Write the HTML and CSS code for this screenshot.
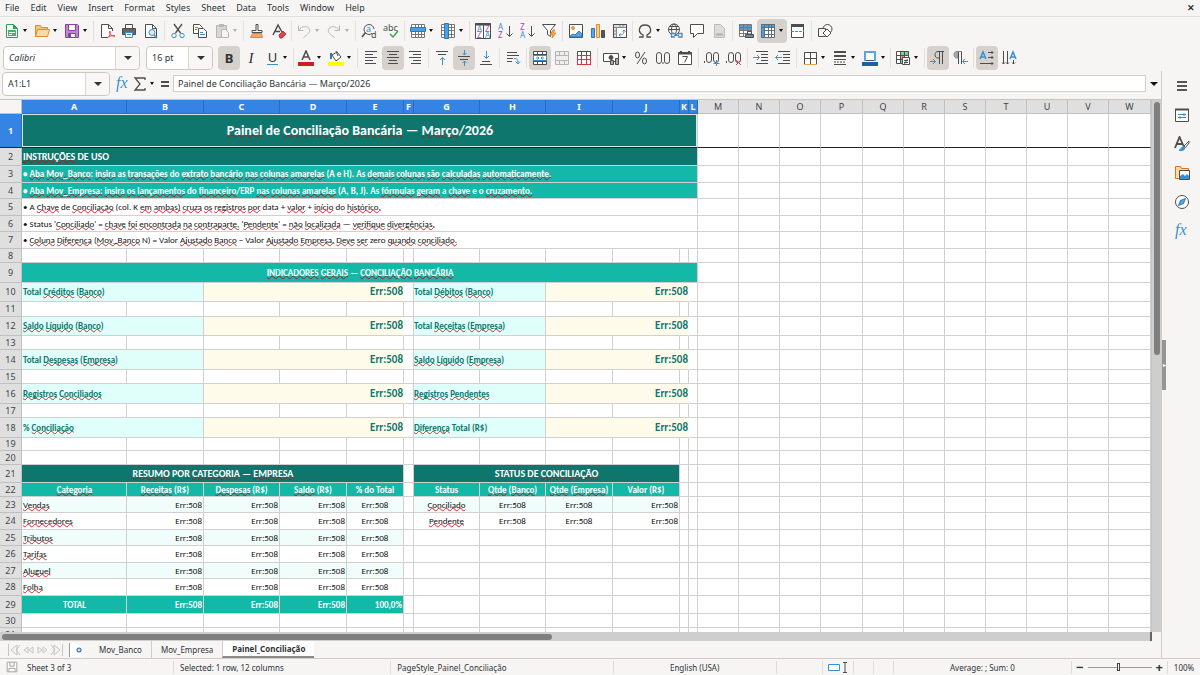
FILE: index.html
```html
<!DOCTYPE html>
<html lang="en">
<head>
    <meta charset="UTF-8">
    <meta name="viewport" content="width=device-width, initial-scale=1.0">
    <title>Painel de Conciliação Bancária</title>
    <link rel="stylesheet" href="styles.css">
</head>
<body>
    <!-- Icon sprite -->
    <svg class="sprite" aria-hidden="true">
        <symbol id="i-new" viewBox="0 0 16 16"><path stroke="#2e9e4f" fill="#fff" d="M2.500 1.500h7l4 4v9h-11z"/><path fill="#2e9e4f" stroke="none" d="M9 1v5h5z"/><path fill="#45b565" stroke="none" d="M4 7h8v6H4z"/><path stroke="#fff" d="M5 9.500h6M5 11.500h3"/></symbol>
        <symbol id="i-open" viewBox="0 0 16 16"><path fill="#f6c37a" stroke="#e08c2b" d="M1.500 13.500v-11h5l1 2h6v2"/><path fill="#fbd9a4" stroke="#e08c2b" d="M1.500 13.500l2-7h12l-2 7z"/></symbol>
        <symbol id="i-save" viewBox="0 0 16 16"><path fill="#c783d4" stroke="#8d3fa0" d="M1.500 1.500h12l1 1v12h-13z"/><path fill="#fff" stroke="#8d3fa0" d="M4.500 1.500h7v6h-7zM4.500 10.500h7v4h-7z"/><path fill="#8d3fa0" stroke="none" d="M5 11h2v3H5z"/></symbol>
        <symbol id="i-pdf" viewBox="0 0 16 16"><path fill="#fff" d="M13.500 8V5.500l-4-4h-7v13H8"/><path d="M9.500 1.500v4h4"/><path stroke="#e0434c" d="M8 15c3-2 4-5 3-7-2 1 1 6 5 5-3-1-6 0-8 2z"/></symbol>
        <symbol id="i-print" viewBox="0 0 16 16"><path fill="#fff" d="M4.500 5V1.500h7V5"/><path fill="#666" d="M1.500 5.500h13v6h-13z"/><path fill="#fff" stroke="#3a8fd0" d="M4.500 9.500h7v5h-7z"/><path stroke="#3a8fd0" d="M6 11.500h4"/></symbol>
        <symbol id="i-preview" viewBox="0 0 16 16"><path fill="#fff" d="M13.500 14.500h-11v-13h7l4 4z"/><path d="M9.500 1.500v4h4"/><circle cx="9" cy="9.500" r="3" fill="#d8ecfa" stroke="#3a8fd0"/><path stroke="#3a8fd0" stroke-width="1.500" d="M11 12l3 3"/></symbol>
        <symbol id="i-cut" viewBox="0 0 16 16"><path stroke-width="1.300" d="M4 1l6.500 9M12 1L5.500 10"/><circle cx="4" cy="12.500" r="2.200" stroke="#3a8fd0"/><circle cx="12" cy="12.500" r="2.200" stroke="#3a8fd0"/></symbol>
        <symbol id="i-copy" viewBox="0 0 16 16"><path fill="#fff" d="M1.500 1.500h6l3 3v6h-9z"/><path fill="#fff" d="M6.500 5.500h5l3 3v6h-8z"/><path stroke="#3a8fd0" d="M8 9.500h3M8 11.500h5M3 4.500h3M3 6.500h2"/></symbol>
        <symbol id="i-paste" viewBox="0 0 16 16"><g stroke="#b5b5b5"><path fill="#d6d6d6" d="M2.500 2.500h10v12h-10z"/><path fill="#bbb" d="M5.500 1.500h4v2h-4z"/><path fill="#f6f5f4" d="M7.500 6.500h4l3 3v5h-7z"/></g></symbol>
        <symbol id="i-brush" viewBox="0 0 16 16"><path d="M7 1.500h2v6h4v2H3v-2h4z"/><path fill="#f3a95a" stroke="#e08c2b" d="M3.500 10.500h9l1 4h-12z"/></symbol>
        <symbol id="i-clear" viewBox="0 0 16 16"><path stroke-width="1.500" d="M2 12L7 2l4 7M4 8.500h5"/><path fill="#e0434c" stroke="#c9303a" d="M8 12l4-4 3 3-4 4H9z"/></symbol>
        <symbol id="i-undo" viewBox="0 0 16 16"><path stroke="#b8b8b8" d="M2.500 2.500v5h5M2.500 7.500c3-5 10-5 11-1 1 3-2 5-6 8"/></symbol>
        <symbol id="i-redo" viewBox="0 0 16 16"><path stroke="#b8b8b8" d="M13.500 2.500v5h-5M13.500 7.500c-3-5-10-5-11-1-1 3 2 5 6 8"/></symbol>
        <symbol id="i-find" viewBox="0 0 16 16"><path d="M11 10.500A5 5 0 1 1 13 6"/><path stroke-width="1.500" d="M4.500 9.500L1 14"/><text x="5" y="9" class="g blue">a</text><text x="10" y="15" class="g">d</text></symbol>
        <symbol id="i-spell" viewBox="0 0 16 16"><text x="0" y="8" class="g">abc</text><path stroke="#35a853" stroke-width="1.500" d="M7 11l3 3 5-6"/></symbol>
        <symbol id="i-rows" viewBox="0 0 16 16"><path fill="#fff" stroke="none" d="M1 1h14v14H1z"/><path stroke="#777" d="M1.500 1.500h13v13h-13zM1 8.500h14M1 11.500h14M5.500 1v14M8.500 1v14M11.500 1v14"/><path fill="#4aa0e0" stroke="#2a78b5" d="M.5 4.500h15v4H.5z"/></symbol>
        <symbol id="i-cols" viewBox="0 0 16 16"><path fill="#fff" stroke="none" d="M1 1h14v14H1z"/><path stroke="#777" d="M1.500 1.500h13v13h-13zM1 4.500h14M1 7.500h14M1 11.500h14M11.500 1v14"/><path fill="#4aa0e0" stroke="#2a78b5" d="M4.500.5h4v15h-4z"/></symbol>
        <symbol id="i-sort" viewBox="0 0 16 16"><path fill="#fff" d="M.5.500h15v15H.5zM8.500 1v14"/><path stroke-width="2" d="M0 1.500h16"/><text x="2" y="9" class="s blue">A</text><text x="2" y="15" class="s purple">Z</text><text x="10" y="9" class="s purple">Z</text><text x="10" y="15" class="s blue">A</text></symbol>
        <symbol id="i-az" viewBox="0 0 16 16"><text x="1" y="7" class="s blue">A</text><text x="1" y="15" class="s purple">Z</text><path d="M12.500 3v10M9.500 10.500l3 3 3-3"/></symbol>
        <symbol id="i-za" viewBox="0 0 16 16"><text x="1" y="7" class="s purple">Z</text><text x="1" y="15" class="s blue">A</text><path d="M12.500 3v10M9.500 10.500l3 3 3-3"/></symbol>
        <symbol id="i-filter" viewBox="0 0 16 16"><path fill="#fff" d="M1.500 1.500h13l-5 6v6l-3-2v-4z"/><path fill="#f3a95a" stroke="#e08c2b" d="M12 7l-3 5h3l-1 3 4-5h-3l2-3z"/></symbol>
        <symbol id="i-image" viewBox="0 0 16 16"><path fill="#fff" d="M1.500 1.500h13v13h-13z"/><circle cx="5" cy="5" r="1.500" fill="#f3a95a" stroke="#e08c2b"/><path fill="#5aa5dd" stroke="#2a78b5" d="M2 14v-1l3-2 2 1 4-4 3 3v3z"/></symbol>
        <symbol id="i-chart" viewBox="0 0 16 16"><path fill="#5aa5dd" stroke="#2a78b5" d="M1.500 5.500h3v9h-3z"/><path fill="#fbd08f" stroke="#e08c2b" d="M6.500 1.500h3v13h-3z"/><path fill="#555" d="M11.500 7.500h3v7h-3z"/></symbol>
        <symbol id="i-pivot" viewBox="0 0 16 16"><path fill="#fff" d="M1.500 1.500h13v13h-13z"/><path fill="#ddd" stroke="#888" d="M1.500 1.500h13v3h-13zM1.500 4.500h3v10h-3zM8 2v2M11 2v2M2 8h2M2 11h2"/><path d="M1.500 1.500h13v13h-13z"/><path stroke="#3a8fd0" d="M7 12c4 0 5-1 5-5M10.500 8.500L12 7l1.500 1.500M8.500 10.500L7 12l1.500 1.500"/></symbol>
        <symbol id="i-omega" viewBox="0 0 16 16"><path stroke-width="1.300" d="M2 14h4v-2C0 9 2 2 8 2s8 7 2 10v2h4"/></symbol>
        <symbol id="i-link" viewBox="0 0 16 16"><circle cx="7" cy="6.500" r="5.500"/><ellipse cx="7" cy="6.500" rx="2.500" ry="5.500"/><path d="M1.500 6.500h11M2.500 3.500h9"/><path fill="#f6f5f4" stroke="#3a8fd0" stroke-width="1.300" d="M8 10.500H4.500V14H8M11 10.500h4V14h-4M7 12.300h5"/></symbol>
        <symbol id="i-comment" viewBox="0 0 16 16"><path fill="#fff" d="M1.500 1.500h13v9h-6l-4 4v-4h-3z"/></symbol>
        <symbol id="i-header" viewBox="0 0 16 16"><path fill="#ddd" stroke="#bbb" d="M3.500 1.500h6l4 4v9h-10z"/><path fill="#bbb" stroke="none" d="M5 10h7v3H5z"/></symbol>
        <symbol id="i-parea" viewBox="0 0 16 16"><path fill="#fff" stroke="none" d="M1 1h13v13H1z"/><path fill="#4aa0e0" stroke="none" d="M1 1h12v6H1z"/><path stroke="#777" d="M1.500 1.500h12v12h-12zM1 4.500h13M1 7.500h13M1 10.500h13M5.500 1v13M9.500 1v13"/><path fill="#fff" d="M9.500 8.500h4V11h-4z"/><path fill="#6b8aa5" d="M7.500 11.500h8v3h-8z"/></symbol>
        <symbol id="i-freeze" viewBox="0 0 16 16"><path fill="#fff" stroke="none" d="M1 1h14v14H1z"/><path fill="#4aa0e0" stroke="none" d="M1 1h14v4H5v10H1z"/><path stroke="#5d6d7a" d="M1.500 1.500h13v13h-13zM1 4.500h14M5 7.500h10M5 11.500h10M4.500 1v14M8.500 1v14M11.500 1v14"/></symbol>
        <symbol id="i-split" viewBox="0 0 16 16"><path fill="#fff" d="M1.500 1.500h12v13h-12z"/><path stroke-width="3" d="M1 2.500h13"/><path stroke="#3a8fd0" stroke-dasharray="3 1" d="M1 8.500h13"/></symbol>
        <symbol id="i-shapes" viewBox="0 0 16 16"><circle cx="10.500" cy="6" r="4.500"/><path fill="#f6f5f4" d="M1.500 5.500h7v8h-7z"/><path fill="#fff" d="M10 6l4 4-4 4-4-4z"/></symbol>

        <symbol id="i-fontcolor" viewBox="0 0 16 16"><path stroke-width="1.500" d="M4 10L8 1l4 9M5.500 7h5"/><path fill="#c9211e" stroke="none" d="M0 12h16v4H0z"/></symbol>
        <symbol id="i-hilite" viewBox="0 0 16 16"><path fill="#fff" d="M4 5l5-3 4 5-5 4zM8 1l2 5"/><path stroke="#2a78b5" stroke-width="2" d="M3 3v6"/><path fill="#ff0" stroke="none" d="M0 12h16v4H0z"/></symbol>
        <symbol id="i-left" viewBox="0 0 16 16"><path d="M2 1.500h12M2 4.500h8M2 7.500h12M2 10.500h8M2 13.500h11"/></symbol>
        <symbol id="i-center" viewBox="0 0 16 16"><path d="M2 1.500h12M4 4.500h8M2 7.500h12M4 10.500h8M3 13.500h10"/></symbol>
        <symbol id="i-right" viewBox="0 0 16 16"><path d="M2 1.500h12M6 4.500h8M2 7.500h12M6 10.500h8M4 13.500h10"/></symbol>
        <symbol id="i-top" viewBox="0 0 16 16"><path d="M2 1.500h12M4 4.500h8"/><path stroke="#3a8fd0" d="M8.500 15V7.500M6 10l2.500-2.500L11 10"/></symbol>
        <symbol id="i-middle" viewBox="0 0 16 16"><path d="M2 6.500h12M4 9.500h8"/><path stroke="#3a8fd0" d="M8.500 0v5M6.500 3l2 2 2-2M8.500 16v-5M6.500 13l2-2 2 2"/></symbol>
        <symbol id="i-bottom" viewBox="0 0 16 16"><path d="M4 11.500h8M2 14.500h12"/><path stroke="#3a8fd0" d="M8.500 1v7.500M6 6l2.500 2.500L11 6"/></symbol>
        <symbol id="i-wrap" viewBox="0 0 16 16"><path d="M2 2.500h10M2 5.500h12M2 8.500h6M2 11.500h5"/><path stroke="#3a8fd0" d="M9 8.500c3 0 4 1 4 5M10.500 11.500l2.500 2.500 2-2.500"/></symbol>
        <symbol id="i-merge" viewBox="0 0 16 16"><path fill="#fff" d="M1.500 1.500h13v13h-13z"/><path d="M1 4.500h14M1 11.500h14M5.500 1v4M10.500 1v4M5.500 11v4M10.500 11v4"/><path fill="#fff" stroke="#3a8fd0" d="M1.500 5.500h13v5h-13zM4 8h3M9 8h3M5.500 6.500L7 8 5.500 9.500M10.500 6.500L9 8l1.500 1.500"/></symbol>
        <symbol id="i-unmerge" viewBox="0 0 16 16"><path stroke="#b5b5b5" fill="#eee" d="M1.500 1.500h13v13h-13zM1 5.500h14M1 10.500h14M5.500 1v4M10.500 1v4M5.500 11v4M10.500 11v4"/></symbol>
        <symbol id="i-mergecells" viewBox="0 0 16 16"><path fill="#fff" d="M1.500 1.500h13v13h-13z"/><path d="M5.500 1v14M10.500 1v14"/><path stroke="#d8343c" d="M1 5.500h14M1 9.500h14M1.500 5v9.500h13V5M5.500 5v9M10.500 5v9"/></symbol>
        <symbol id="i-currency" viewBox="0 0 16 16"><path fill="#fff" d="M.5 3.500h15v8H.5z"/><circle cx="8" cy="7.500" r="2" fill="#4d4d4d"/><path fill="#aaa" d="M7.500 10.500h3v4h-3zM12.500 8.500h3v6h-3z"/></symbol>
        <symbol id="i-percent" viewBox="0 0 16 16"><ellipse cx="4.500" cy="5" rx="2" ry="3"/><ellipse cx="11.500" cy="11" rx="2" ry="3"/><path d="M12 2L4 14"/></symbol>
        <symbol id="i-number" viewBox="0 0 16 16"><rect x="1.500" y="2.500" width="5" height="11" rx="2.500"/><rect x="9.500" y="2.500" width="5" height="11" rx="2.500"/><path d="M8 12v2"/></symbol>
        <symbol id="i-date" viewBox="0 0 16 16"><path fill="#fff" d="M1.500 2.500h13v12h-13z"/><path stroke-width="2" d="M1 3.500h14M4 1v3M12 1v3"/><path d="M5.500 6.500h5l-3 6"/></symbol>
        <symbol id="i-adddec" viewBox="0 0 16 16"><path d="M.5 11v2"/><rect x="2.500" y="2.500" width="5" height="10" rx="2.500"/><rect x="9.500" y="2.500" width="5" height="10" rx="2.500"/><path stroke="#3a8fd0" d="M12.500 10v6M9.500 13.500h6"/></symbol>
        <symbol id="i-deldec" viewBox="0 0 16 16"><path d="M.5 11v2"/><rect x="2.500" y="2.500" width="5" height="10" rx="2.500"/><rect x="9.500" y="2.500" width="5" height="10" rx="2.500"/><path stroke="#d8343c" d="M10 10l5 5M15 10l-5 5"/></symbol>
        <symbol id="i-indent" viewBox="0 0 16 16"><path d="M3 1.500h12M8 4.500h7M8 7.500h7M8 10.500h7M3 13.500h12"/><path stroke="#3a8fd0" d="M0 7.500h6M4 5l2.500 2.500L4 10"/></symbol>
        <symbol id="i-outdent" viewBox="0 0 16 16"><path d="M3 1.500h12M8 4.500h7M8 7.500h7M8 10.500h7M3 13.500h12"/><path stroke="#3a8fd0" d="M1 7.500h6M3 5L.5 7.500 3 10"/></symbol>
        <symbol id="i-borders" viewBox="0 0 16 16"><path fill="#fff" stroke="#888" d="M2.500 2.500h12v12h-12z"/><path d="M2.500 14V2.500h12V14M8.500 2v12M2 8.500h12"/><path stroke="#e6a44c" d="M2 14.500h13"/></symbol>
        <symbol id="i-linestyle" viewBox="0 0 16 16"><path stroke-width="2" d="M2 2h12M2 6h12"/><path d="M2 9.500h12M2 14.500h12"/><path stroke-dasharray="2 1" d="M2 12h12"/></symbol>
        <symbol id="i-bordercolor" viewBox="0 0 16 16"><path fill="#fff" d="M2.500 1.500h11v9h-11z"/><path stroke="#5aa5dd" stroke-width="2" d="M3 11V2h10v9"/><path fill="#1f5fa0" stroke="none" d="M0 12h16v4H0z"/></symbol>
        <symbol id="i-cond" viewBox="0 0 16 16"><path fill="#fff" stroke="none" d="M1 1h13v13H1z"/><path fill="#7fd08f" stroke="none" d="M5 1h9v4H5zM5 9h5v4H5z"/><path fill="#e88" stroke="none" d="M5 5h5v4H5z"/><path d="M1.500 1.500h12v12h-12zM1 5.500h12M1 9.500h12M5.500 1v12M9.500 1v12"/><path fill="#fff" d="M7.500 7.500h7v7h-7zM9 10.500h4M9 12.500h4M12.500 9l-3 5"/></symbol>
        <symbol id="i-ltr" viewBox="0 0 16 16"><path d="M14 1.500H8C4 1.500 4 8 8 8h1M9.500 2v12M12.500 2v12"/><path stroke="#3a8fd0" d="M0 11.500h5M3 9l2.500 2.500L3 14"/></symbol>
        <symbol id="i-rtl" viewBox="0 0 16 16"><path fill="#aaa" stroke="#888" d="M10 1.500H5C1 1.500 1 8 5 8h1V2"/><path d="M6.500 2v12M9.500 2v12"/><path stroke="#3a8fd0" d="M16 11.500h-5M13 9l-2.500 2.500L13 14"/></symbol>
        <symbol id="i-horz" viewBox="0 0 16 16"><path stroke="#3a8fd0" stroke-width="1.500" d="M1 9l3-7 3 7M2 7h4"/><path d="M9 2.500h5M9 7.500h5M1 13.500h13M12.500 1L14 2.500 12.500 4M12.500 6L14 7.500 12.500 9M12.500 12l1.500 1.500-1.500 1.500"/></symbol>
        <symbol id="i-vert" viewBox="0 0 16 16"><path stroke="#3a8fd0" stroke-width="1.500" d="M9 9l3-7 3 7M10 7h4"/><path d="M2.500 1v13M6.500 1v13M12.500 10v4M1 12.500L2.500 14 4 12.500M5 12.500L6.500 14 8 12.500M11 12.500l1.500 1.500 1.500-1.500"/></symbol>

        <symbol id="i-sum" viewBox="0 0 16 16"><path stroke-width="1.300" d="M13 4V2H3l5 6-5 6h10v-2"/></symbol>
        <symbol id="i-equals" viewBox="0 0 16 16"><path stroke-width="2" d="M4 6h8M4 10h8"/></symbol>
        <symbol id="i-menu" viewBox="0 0 16 16"><path stroke="#222" stroke-width="1.500" d="M3 4h10M3 8h10M3 12h10"/></symbol>
        <symbol id="i-props" viewBox="0 0 16 16"><path fill="#fff" d="M1.500 2.500h13v12h-13z"/><path stroke-width="2" d="M1 2.500h14"/><path stroke="#3a8fd0" d="M4 7.500h8M4 10.500h8M10 6v3M6 9v3"/></symbol>
        <symbol id="i-styles" viewBox="0 0 16 16"><path stroke-width="1.800" d="M1 12L5.500 1l4 9M3 8h5.500"/><path fill="#fff" d="M15 5l-5 5 1.500 1.500L15 7z"/><path fill="#3a8fd0" stroke="#3a8fd0" d="M10 10.500c-3 0-2 3-5 3.500 3 1.500 6 0 6-2.500z"/></symbol>
        <symbol id="i-gallery" viewBox="0 0 16 16"><path fill="#fbd9a4" stroke="#e0701b" d="M1.500 13.500v-12h5l1 2h7v3M1.500 13.500h4"/><path fill="#fff" d="M5.500 5.500h10v9h-10z"/><path fill="#3a8fd0" stroke="none" d="M6 14v-3l3-2 2 2 2-2 2 2v3z"/></symbol>
        <symbol id="i-nav" viewBox="0 0 16 16"><circle cx="8" cy="8" r="6.500" fill="#fff"/><path fill="#5aa5dd" stroke="#2a78b5" d="M11.500 4.500L9.500 9.500l-5 2 2-5z"/></symbol>
        <symbol id="i-fx" viewBox="0 0 16 16"><text x="1" y="12" class="f blue">fx</text></symbol>
        <symbol id="i-disk" viewBox="0 0 16 16"><path stroke="#999" fill="#fff" d="M2.500 2.500h11v11h-11zM5.500 3v4h5V3M4.500 13V9.500h7V13"/></symbol>
        <symbol id="i-addsheet" viewBox="0 0 16 16"><path stroke="none" fill="#fff" d="M1 1h8l4 4v10H1z"/><path stroke="#999" d="M1.500 1v14"/><circle cx="11" cy="8" r="2.500" fill="#2a6fc0" stroke="none"/><path stroke="#fff" d="M11 6.500v3M9.500 8h3"/></symbol>
        <symbol id="i-first" viewBox="0 0 16 16"><path stroke="#c4c4c4" d="M3.500 2v12M12 3L6 8l6 5zM15 3l-4 5 4 5"/></symbol>
        <symbol id="i-prev" viewBox="0 0 16 16"><path stroke="#c4c4c4" d="M8 5L4 8l4 3zM13 5L9 8l4 3z"/></symbol>
        <symbol id="i-next" viewBox="0 0 16 16"><path stroke="#c4c4c4" d="M3 5l4 3-4 3zM8 5l4 3-4 3z"/></symbol>
        <symbol id="i-last" viewBox="0 0 16 16"><path stroke="#c4c4c4" d="M12.500 2v12M4 3l6 5-6 5zM1 3l4 5-4 5"/></symbol>
        <symbol id="i-selmode" viewBox="0 0 24 16"><path stroke="#3a8fd0" fill="#fff" d="M2.500 5.500h11v6h-11z"/><path d="M17 3.500h4M17 13.500h4M19 3.500v10"/></symbol>
    </svg>

    <nav class="menubar">
        <button>File</button>
        <button>Edit</button>
        <button>View</button>
        <button>Insert</button>
        <button>Format</button>
        <button>Styles</button>
        <button>Sheet</button>
        <button>Data</button>
        <button>Tools</button>
        <button>Window</button>
        <button>Help</button>
        <button class="close" aria-label="Close document">✕</button>
    </nav>

    <div class="toolbar" id="standardBar"></div>

    <div class="toolbar">
        <div class="combo combo-font">
            <select aria-label="Font name"><option>Calibri</option></select>
        </div>
        <div class="combo combo-size">
            <select aria-label="Font size"><option>16 pt</option></select>
        </div>
        <div class="tools" id="formatBar"></div>
    </div>

    <main class="workspace">
        <section class="document">
            <div class="formula-bar">
                <div class="combo combo-name">
                    <select aria-label="Name box"><option>A1:L1</option></select>
                </div>
                <div class="tools compact" id="formulaTools"></div>
                <input class="formula" type="text" aria-label="Formula" value="Painel de Conciliação Bancária — Março/2026">
                <button class="expand" aria-label="Expand formula bar"><i class="caret big"></i></button>
            </div>
            <div class="sheet-area">
                <div class="sheet" id="sheet">
                    <table class="grid" id="grid"></table>
                </div>
                <div class="vscroll"><div class="vthumb"></div></div>
            </div>
            <div class="hscroll"><div class="hthumb"></div></div>
            <div class="tabs">
                <div class="tab-nav" id="tabNav"></div>
                <button class="tab">Mov_Banco</button>
                <button class="tab">Mov_Empresa</button>
                <button class="tab active">Painel_Conciliação</button>
            </div>
        </section>
        <div class="splitter"><button aria-label="Hide sidebar">▸</button></div>
        <aside class="sidebar" id="sidebar"></aside>
    </main>

    <footer class="status">
        <span class="st-doc"><svg class="ic small"><use href="#i-disk"/></svg>Sheet 3 of 3</span>
        <span class="st-sel">Selected: 1 row, 12 columns</span>
        <span class="st-style">PageStyle_Painel_Conciliação</span>
        <span class="st-lang">English (USA)</span>
        <span class="st-insert"></span>
        <span class="st-mode"><svg class="ic wide"><use href="#i-selmode"/></svg></span>
        <span class="st-box"></span>
        <span class="st-box"></span>
        <span class="st-sum">Average: ; Sum: 0</span>
        <span class="st-zoom">
            <button aria-label="Zoom out">−</button>
            <input type="range" min="0" max="100" value="49" aria-label="Zoom">
            <button aria-label="Zoom in">+</button>
        </span>
        <span class="st-pct">100%</span>
    </footer>

    <script>
        // Toolbars: "name" is a button, "name+" has a dropdown arrow, "*name" is switched on,
        // "-name" is disabled, "|" is a separator and "!" a narrow one
        function buildTools(id, list) {
            const bar = document.getElementById(id);
            bar.innerHTML = list.split(' ').map(item => {
                if (item === '|') return '<i class="sep"></i>';
                if (item === '!') return '<i class="sep narrow"></i>';
                const on = item.startsWith('*');
                const off = item.startsWith('-');
                const split = item.endsWith('+');
                const name = item.replace(/[*+-]/g, '');
                const face = name.length === 1
                    ? `<span class="letter letter-${name}">${name}</span>`
                    : `<svg class="ic"><use href="#i-${name}"/></svg>`;
                return `<button class="tool${split ? ' split' : ''}${on ? ' on' : ''}${off ? ' off' : ''}" aria-label="${name}">${face}${split ? '<i class="caret"></i>' : ''}</button>`;
            }).join('');
        }

        buildTools('standardBar', 'new+ open+ save+ | pdf print preview | cut copy -paste+ | brush clear ! -undo+ -redo+ | find spell | rows+ cols+ | sort az za filter | image chart pivot ! omega+ link comment -header | parea *freeze+ split | shapes');
        buildTools('formatBar', '*B I U+ ! fontcolor+ hilite+ | left *center right | top *middle bottom | wrap | *merge -unmerge mergecells | currency+ percent number date | adddec deldec | indent outdent | borders+ linestyle+ bordercolor+ ! cond+ | *ltr rtl | *horz vert');
        buildTools('formulaTools', 'fx sum+ equals');
        buildTools('tabNav', 'first prev next last addsheet');
        buildTools('sidebar', 'menu props styles gallery nav fx');

        // Sheet geometry: row header + columns A to W, then default sizes
        const colWidths = [22, 105, 77, 76, 67, 57, 10, 66, 66, 67, 67, 9, 9, 41, 41, 41, 42, 41, 41, 41, 41, 41, 41, 42];
        const rowHeights = [34, 18, 17, 16, 17, 16, 17, 14, 20, 19, 15, 19, 14, 20, 14, 20, 14, 20, 13, 14, 18, 14, 16, 17, 16, 17, 16, 17, 18, 14];
        const defaultWidth = 41;
        const defaultHeight = 14;
        const selectedCols = 12;

        // Cells: row -> [column, span, class, text]; words between ~ ~ are flagged by the spell checker
        const E = 'Err:508';
        const rows = {
            1: [[1, 12, 'title', '~Painel~ de ~Conciliação~ ~Bancária~ — ~Março~/2026']],
            2: [[1, 12, 'dark head', '~INSTRUÇÕES~ DE USO']],
            3: [[1, 12, 'teal note', '• ~Aba~ ~Mov_Banco~: ~insira~ as ~transações~ do ~extrato~ ~bancário~ ~nas~ ~colunas~ ~amarelas~ (A e H). As ~demais~ ~colunas~ ~são~ ~calculadas~ ~automaticamente.~']],
            4: [[1, 12, 'teal note', '• ~Aba~ ~Mov_Empresa:~ ~insira~ ~os~ ~lançamentos~ do ~financeiro~/ERP ~nas~ ~colunas~ ~amarelas~ (A, B, J). As ~fórmulas~ ~geram~ a ~chave~ e o ~cruzamento.~']],
            5: [[1, 12, 'text', '• A ~Chave~ de ~Conciliação~ (col. K ~em~ ~ambas)~ ~cruza~ ~os~ ~registros~ ~por~ data + ~valor~ + ~início~ do ~histórico.~']],
            6: [[1, 12, 'text', "• Status '~Conciliado~' = ~chave~ ~foi~ ~encontrada~ ~na~ ~contraparte,~ '~Pendente~' = ~não~ ~localizada~ — ~verifique~ ~divergências.~"]],
            7: [[1, 12, 'text', '• ~Coluna~ ~Diferença~ (~Mov_Banco~ N) = Valor ~Ajustado~ ~Banco~ − Valor ~Ajustado~ ~Empresa.~ ~Deve~ ~ser~ zero ~quando~ ~conciliado.~']],
            9: [[1, 12, 'teal mid', '~INDICADORES~ ~GERAIS~ — ~CONCILIAÇÃO~ ~BANCÁRIA~']],
            21: [[1, 5, 'dark head mid', '~RESUMO~ POR ~CATEGORIA~ — ~EMPRESA~'], [7, 4, 'dark head mid', 'STATUS DE ~CONCILIAÇÃO~']],
            22: [[1, 1, 'teal mid', '~Categoria~'], [2, 1, 'teal mid', '~Receitas~ (R$)'], [3, 1, 'teal mid', '~Despesas~ (R$)'], [4, 1, 'teal mid', '~Saldo~ (R$)'], [5, 1, 'teal mid', '% do Total'],
                 [7, 1, 'teal mid', 'Status'], [8, 1, 'teal mid', '~Qtde~ (~Banco~)'], [9, 1, 'teal mid', '~Qtde~ (~Empresa~)'], [10, 1, 'teal mid', 'Valor (R$)']],
            29: [[1, 1, 'teal mid', 'TOTAL'], [2, 1, 'teal num', E], [3, 1, 'teal num', E], [4, 1, 'teal num', E], [5, 1, 'teal num', '100,0%']]
        };

        [
            [10, 'Total ~Créditos~ (~Banco~)', 'Total ~Débitos~ (~Banco~)'],
            [12, '~Saldo~ ~Líquido~ (~Banco~)', 'Total ~Receitas~ (~Empresa~)'],
            [14, 'Total ~Despesas~ (~Empresa~)', '~Saldo~ ~Líquido~ (~Empresa~)'],
            [16, '~Registros~ ~Conciliados~', '~Registros~ ~Pendentes~'],
            [18, '% ~Conciliação~', '~Diferença~ Total (R$)']
        ].forEach(([row, left, right]) => {
            rows[row] = [[1, 2, 'label', left], [3, 3, 'kpi', E], [7, 2, 'label', right], [9, 3, 'kpi', E]];
        });

        ['Vendas', 'Fornecedores', 'Tributos', 'Tarifas', 'Aluguel', 'Folha'].forEach((name, i) => {
            const band = i % 2 ? '' : ' band';
            const cells = [[1, 1, 'text' + band, `~${name}~`]];
            for (let c = 2; c <= 4; c++) cells.push([c, 1, 'num' + band, E]);
            cells.push([5, 1, 'mid' + band, E]);
            if (i < 2) {
                cells.push([7, 1, 'text mid' + band, i ? '~Pendente~' : '~Conciliado~']);
                cells.push([8, 1, 'mid' + band, E], [9, 1, 'mid' + band, E], [10, 1, 'num' + band, E]);
            }
            rows[23 + i] = cells;
        });

        function colName(n) {
            return n > 26 ? colName(Math.floor((n - 1) / 26)) + colName((n - 1) % 26 + 1) : String.fromCharCode(64 + n);
        }

        // Pads the sizes with defaults until they cover the visible space
        function fill(sizes, size, space) {
            const out = sizes.slice();
            let total = out.reduce((a, b) => a + b, 0);
            while (total < space) {
                out.push(size);
                total += size;
            }
            return out;
        }

        function buildGrid() {
            const sheet = document.getElementById('sheet');
            const grid = document.getElementById('grid');
            const widths = fill(colWidths, defaultWidth, sheet.clientWidth);
            const heights = fill(rowHeights, defaultHeight, sheet.clientHeight - defaultHeight);
            const count = widths.length - 1;

            let html = '<colgroup>' + widths.map(w => `<col style="width:${w}px">`).join('') + '</colgroup>';
            html += '<thead><tr><th></th>';
            for (let c = 1; c <= count; c++) {
                html += `<th class="${c <= selectedCols ? 'sel' : ''}">${colName(c)}</th>`;
            }
            html += '</tr></thead><tbody>';
            heights.forEach((h, i) => {
                const r = i + 1;
                const cells = rows[r] || [];
                html += `<tr style="height:${h}px"${r === 1 ? ' class="frozen"' : ''}><th class="${r === 1 ? 'sel' : ''}">${r}</th>`;
                for (let c = 1; c <= count; c++) {
                    const cell = cells.find(x => x[0] === c);
                    if (cell) {
                        html += `<td colspan="${cell[1]}" class="${cell[2]}">${cell[3].replace(/~([^~]+)~/g, '<u>$1</u>')}</td>`;
                        c += cell[1] - 1;
                    } else {
                        html += '<td></td>';
                    }
                }
                html += '</tr>';
            });
            grid.innerHTML = html + '</tbody>';
            grid.style.width = widths.reduce((a, b) => a + b, 0) + 'px';
        }

        buildGrid();
        window.onresize = buildGrid;
    </script>
</body>
</html>
```
FILE: styles.css
```css
/* Basic Setup */
* {
    box-sizing: border-box;
}

body {
    margin: 0;
    height: 100vh;
    display: flex;
    flex-direction: column;
    overflow: hidden;
    background: #f6f5f4;
    color: #2e3436;
    font-family: "Noto Sans", "Open Sans", sans-serif;
    font-size: 9px;
}

button, input, select {
    font: inherit;
    color: inherit;
    border: none;
    background: none;
    padding: 0;
    margin: 0;
}

.sprite {
    display: none;
}

/* Icons */
.ic {
    width: 16px;
    height: 16px;
    flex: none;
    fill: none;
    stroke: #4d4d4d;
}

.ic.small {
    width: 14px;
    height: 14px;
}

.ic.wide {
    width: 24px;
}

.g, .s, .f {
    stroke: none;
    fill: #4d4d4d;
    font-size: 9px;
}

.s {
    font-size: 8px;
}

.f {
    font: italic 16px "Liberation Serif", serif;
}

.blue {
    fill: #3a8fd0;
}

.purple {
    fill: #a347ba;
}

.caret {
    width: 0;
    height: 0;
    border: 2px solid transparent;
    border-top: 3px solid #111;
    border-bottom: 0;
}

.caret.big {
    border-width: 4px 4px 0;
}

/* Menu bar */
.menubar {
    display: flex;
    gap: 11px;
    height: 17px;
    padding: 0 5px;
    border-bottom: 1px solid #e2e0de;
    line-height: 16px;
}

.menubar .close {
    margin-left: auto;
    font-weight: bold;
}

/* Toolbars */
.toolbar {
    display: flex;
    align-items: center;
    height: 27px;
    padding-left: 1px;
}

.tools {
    display: flex;
    align-items: center;
}

.tool {
    width: 22px;
    height: 24px;
    display: flex;
    align-items: center;
    justify-content: center;
    border-radius: 4px;
}

.tool.split {
    width: 30px;
    justify-content: flex-start;
    gap: 3px;
    padding-left: 3px;
}

.tool.on {
    background: #d5d1cd;
}

.tool.off .caret {
    border-top-color: #b0b0b0;
}

.compact .tool {
    width: 16px;
}

.compact .tool.split {
    width: 26px;
    padding-left: 1px;
    gap: 2px;
}

.sep {
    width: 1px;
    height: 20px;
    margin: 0 2px;
    background: #e3e1df;
}

.sep.narrow {
    margin: 0 1px;
}

.letter {
    width: 16px;
    font-size: 13px;
    line-height: 16px;
    text-align: center;
}

.letter-B {
    font-weight: bold;
}

.letter-I {
    font-style: italic;
    font-family: "Liberation Serif", serif;
    font-size: 15px;
}

.letter-U {
    width: 11px;
    margin: 0 2px;
    border-bottom: 1px solid #3a8fd0;
    line-height: 14px;
}

.combo {
    position: relative;
    height: 24px;
    margin-left: 2px;
    border: 1px solid #cdc7c2;
    border-radius: 4px;
    background: #fff;
}

.combo select {
    width: 100%;
    height: 100%;
    padding-left: 5px;
    appearance: none;
}

.combo::before {
    content: "";
    position: absolute;
    right: 0;
    width: 23px;
    height: 100%;
    border-left: 1px solid #d9d5d1;
    background: #f8f7f6;
    border-radius: 0 4px 4px 0;
    pointer-events: none;
}

.combo::after {
    content: "";
    position: absolute;
    right: 7px;
    top: 9px;
    border: 4px solid transparent;
    border-top-color: #2e3436;
    border-bottom: 0;
    pointer-events: none;
}

.combo-font {
    width: 137px;
}

.combo-font select {
    font-style: italic;
}

.combo-size {
    width: 67px;
    margin: 0 5px 0 6px;
}

/* Workspace */
.workspace {
    flex: 1;
    min-height: 0;
    display: flex;
}

.document {
    flex: 1;
    min-width: 0;
    display: flex;
    flex-direction: column;
}

.formula-bar {
    display: flex;
    align-items: center;
    height: 29px;
    padding-bottom: 3px;
    border-bottom: 1px solid #c4c4c4;
}

.combo-name {
    width: 108px;
    margin-right: 5px;
}

.formula {
    flex: 1;
    min-width: 0;
    height: 17px;
    padding-left: 4px;
    border: 1px solid #d0ccc8;
    background: #fff;
}

.expand {
    width: 15px;
    display: flex;
    justify-content: center;
}

.sheet-area {
    flex: 1;
    min-height: 0;
    display: flex;
}

.sheet {
    flex: 1;
    min-width: 0;
    overflow: hidden;
    background: #fff;
    border-right: 1px solid #c4c4c4;
}

/* Scrollbars */
.vscroll {
    width: 9px;
    padding: 2px;
    background: #cecece;
}

.vthumb {
    width: 6px;
    height: 48%;
    border-radius: 3px;
    background: #7f7f7f;
}

.hscroll {
    height: 9px;
    padding: 2px;
    margin-right: 9px;
    background: #cecece;
    border-right: 2px solid #666;
}

.hthumb {
    width: 48%;
    height: 6px;
    border-radius: 3px;
    background: #7f7f7f;
}

/* Grid */
.grid {
    table-layout: fixed;
    border-collapse: separate;
    border-spacing: 0;
    font-family: Carlito, Lato, sans-serif;
    font-size: 9px;
    line-height: 12px;
    color: #111;
}

.grid td, .grid th {
    padding: 0;
    border-right: 1px solid #d0d0d0;
    border-bottom: 1px solid #d0d0d0;
    white-space: nowrap;
    overflow: hidden;
}

.grid td:nth-child(2) {
    padding-left: 1px;
}

.grid th {
    background: #dfdfdf;
    color: #444;
    border-color: #c0c0c0;
    font-family: "Noto Sans", "Open Sans", sans-serif;
    font-size: 9px;
    font-weight: normal;
}

.grid thead th {
    height: 14px;
}

.grid thead th:first-child {
    background: #f6f5f4;
}

.grid th.sel {
    background: #3584e4;
    border-color: #2a6cc0;
    color: #fff;
    font-weight: bold;
}

.grid .frozen td, .grid .frozen th {
    border-bottom: 1px solid #222;
}

.grid u {
    text-decoration: underline wavy #e0202a 1px;
    text-underline-offset: -1px;
    text-decoration-skip-ink: none;
}

.grid .title {
    background: #0f766e;
    color: #fff;
    font-size: 14px;
    line-height: 16px;
    font-weight: bold;
    text-align: center;
    box-shadow: inset 0 0 0 1px #d7e8e6;
}

.grid .dark {
    background: #0f766e;
    color: #fff;
    font-weight: bold;
}

.grid .head {
    font-size: 10px;
}

.grid .teal {
    background: #14b8a6;
    color: #fff;
    font-weight: bold;
}

.grid .title u, .grid .dark u, .grid .teal u {
    text-decoration-color: #b3151f;
}

.grid .mid {
    text-align: center;
}

.grid .num {
    text-align: right;
    padding-right: 1px;
}

.grid .band {
    background: #f0fdfa;
}

.grid .label {
    background: #e0fffa;
    color: #0f766e;
    font-weight: bold;
}

.grid .kpi {
    background: #fffbeb;
    color: #0f766e;
    border-right-color: #fffbeb;
    font-size: 11px;
    font-weight: bold;
    text-align: right;
}

/* Sheet tabs */
.tabs {
    display: flex;
    height: 17px;
    align-items: stretch;
}

.tab-nav {
    display: flex;
    align-items: center;
    padding: 0 3px 0 5px;
}

.tab-nav .tool {
    width: 15px;
    height: 16px;
}

.tab-nav .tool:last-child {
    width: 22px;
}

.tab {
    padding: 0 9px;
    font-size: 8px;
}

.tab + .tab {
    border-left: 1px solid #d0ccc8;
}

.tab.active {
    background: #fff;
    border-bottom: 2px solid #8a8a8a;
    font-weight: bold;
}

/* Sidebar */
.splitter {
    width: 5px;
    display: flex;
    flex-direction: column;
    justify-content: center;
    border-left: 1px solid #d0ccc8;
}

.splitter button {
    width: 4px;
    height: 50px;
    background: #959595;
    color: #fff;
    font-size: 6px;
}

.sidebar {
    width: 34px;
    display: flex;
    flex-direction: column;
    align-items: center;
    gap: 5px;
    padding: 3px 3px 0 0;
}

/* Status bar */
.status {
    display: flex;
    align-items: center;
    height: 17px;
    border-top: 1px solid #d0ccc8;
    font-size: 8px;
}

.status > span {
    display: flex;
    align-items: center;
    justify-content: center;
    height: 13px;
    border-right: 1px solid #dedbd8;
}

.status .st-doc {
    width: 174px;
    gap: 8px;
    padding-left: 5px;
    justify-content: flex-start;
}

.status .st-sel {
    flex: 210;
    padding-left: 6px;
    justify-content: flex-start;
}

.status .st-style {
    flex: 215;
    padding-left: 6px;
    justify-content: flex-start;
}

.status .st-lang {
    flex: 162;
}

.st-insert {
    width: 46px;
}

.st-mode {
    width: 31px;
}

.st-box {
    width: 20px;
}

.status .st-sum {
    flex: 177;
}

.status .st-zoom {
    width: 96px;
    gap: 4px;
    padding: 0 4px;
}

.st-zoom button {
    font-size: 13px;
    font-weight: bold;
    line-height: 12px;
}

.st-zoom input {
    flex: 1;
    min-width: 0;
    height: 12px;
    appearance: none;
    background: linear-gradient(#999, #999) center / 100% 1px no-repeat;
}

.st-zoom input::-webkit-slider-thumb {
    appearance: none;
    width: 3px;
    height: 8px;
    border: 1px solid #444;
    background: #f6f5f4;
}

.status .st-pct {
    width: 32px;
    border-right: none;
}
```
